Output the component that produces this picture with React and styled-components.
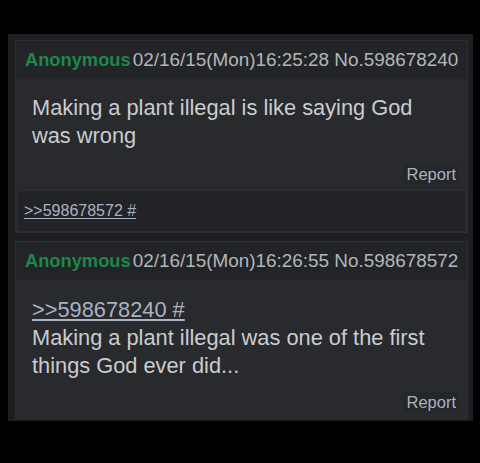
import React from "react";
import styled, { createGlobalStyle } from "styled-components";

const Global = createGlobalStyle`
  html, body { margin: 0; padding: 0; background: #000; }
  body { font-family: "Liberation Sans", Arial, sans-serif; }
`;

const Page = styled.div`
  width: 480px;
  height: 463px;
  background: #000;
  padding-top: 34px;
  box-sizing: border-box;
`;

const Panel = styled.div`
  margin-left: 8px;
  width: 465px;
  box-sizing: border-box;
  background: #1e1f23;
  padding: 6px 5px 2px 7px;
  display: flex;
  flex-direction: column;
  gap: 8px;
`;

const Post = styled.div`
  background: #282a2e;
  border: 1px solid #2e3034;
  display: flex;
  flex-direction: column;
`;

const Header = styled.div`
  height: 38px;
  background: #222427;
  display: flex;
  align-items: center;
  padding-left: 9px;
  font-size: 18.9px;
  color: #b3b6ba;
  white-space: nowrap;
`;

const Name = styled.span`
  color: #1e874b;
  font-weight: bold;
  font-size: 18.3px;
  margin-right: 2px;
`;

const Body = styled.div`
  padding: ${(p) => p.$pt}px 20px 0 16px;
  font-size: 21.8px;
  line-height: 28px;
  color: #caccce;
`;

const Quote = styled.a`
  color: #a9b3c2;
  text-decoration: underline;
  text-underline-offset: 2px;
`;

const Footer = styled.div`
  display: flex;
  justify-content: flex-end;
  padding: ${(p) => p.$pt}px 9px ${(p) => p.$pb}px 0;
`;

const Report = styled.span`
  background: #23262b;
  color: #aeb3bb;
  font-size: 16.5px;
  line-height: 20px;
  padding: 0 2px;
`;

const Backlinks = styled.div`
  height: 40px;
  margin: 0 1px;
  background: #222327;
  border: 1px solid #2c2e32;
  display: flex;
  align-items: center;
  padding-left: 6px;
  font-size: 16px;
`;

export default function App() {
  return (
    <>
      <Global />
      <Page>
        <Panel>
          <Post>
            <Header>
              <Name>Anonymous</Name>02/16/15(Mon)16:25:28 No.598678240
            </Header>
            <Body $pt={15}>
              Making a plant illegal is like saying God was wrong
            </Body>
            <Footer $pt={14} $pb={6}>
              <Report>Report</Report>
            </Footer>
            <Backlinks>
              <Quote>&gt;&gt;598678572 #</Quote>
            </Backlinks>
          </Post>
          <Post>
            <Header>
              <Name>Anonymous</Name>02/16/15(Mon)16:26:55 No.598678572
            </Header>
            <Body $pt={16}>
              <Quote>&gt;&gt;598678240 #</Quote>
              <br />
              Making a plant illegal was one of the first things God ever did...
            </Body>
            <Footer $pt={12} $pb={6}>
              <Report>Report</Report>
            </Footer>
          </Post>
        </Panel>
      </Page>
    </>
  );
}
